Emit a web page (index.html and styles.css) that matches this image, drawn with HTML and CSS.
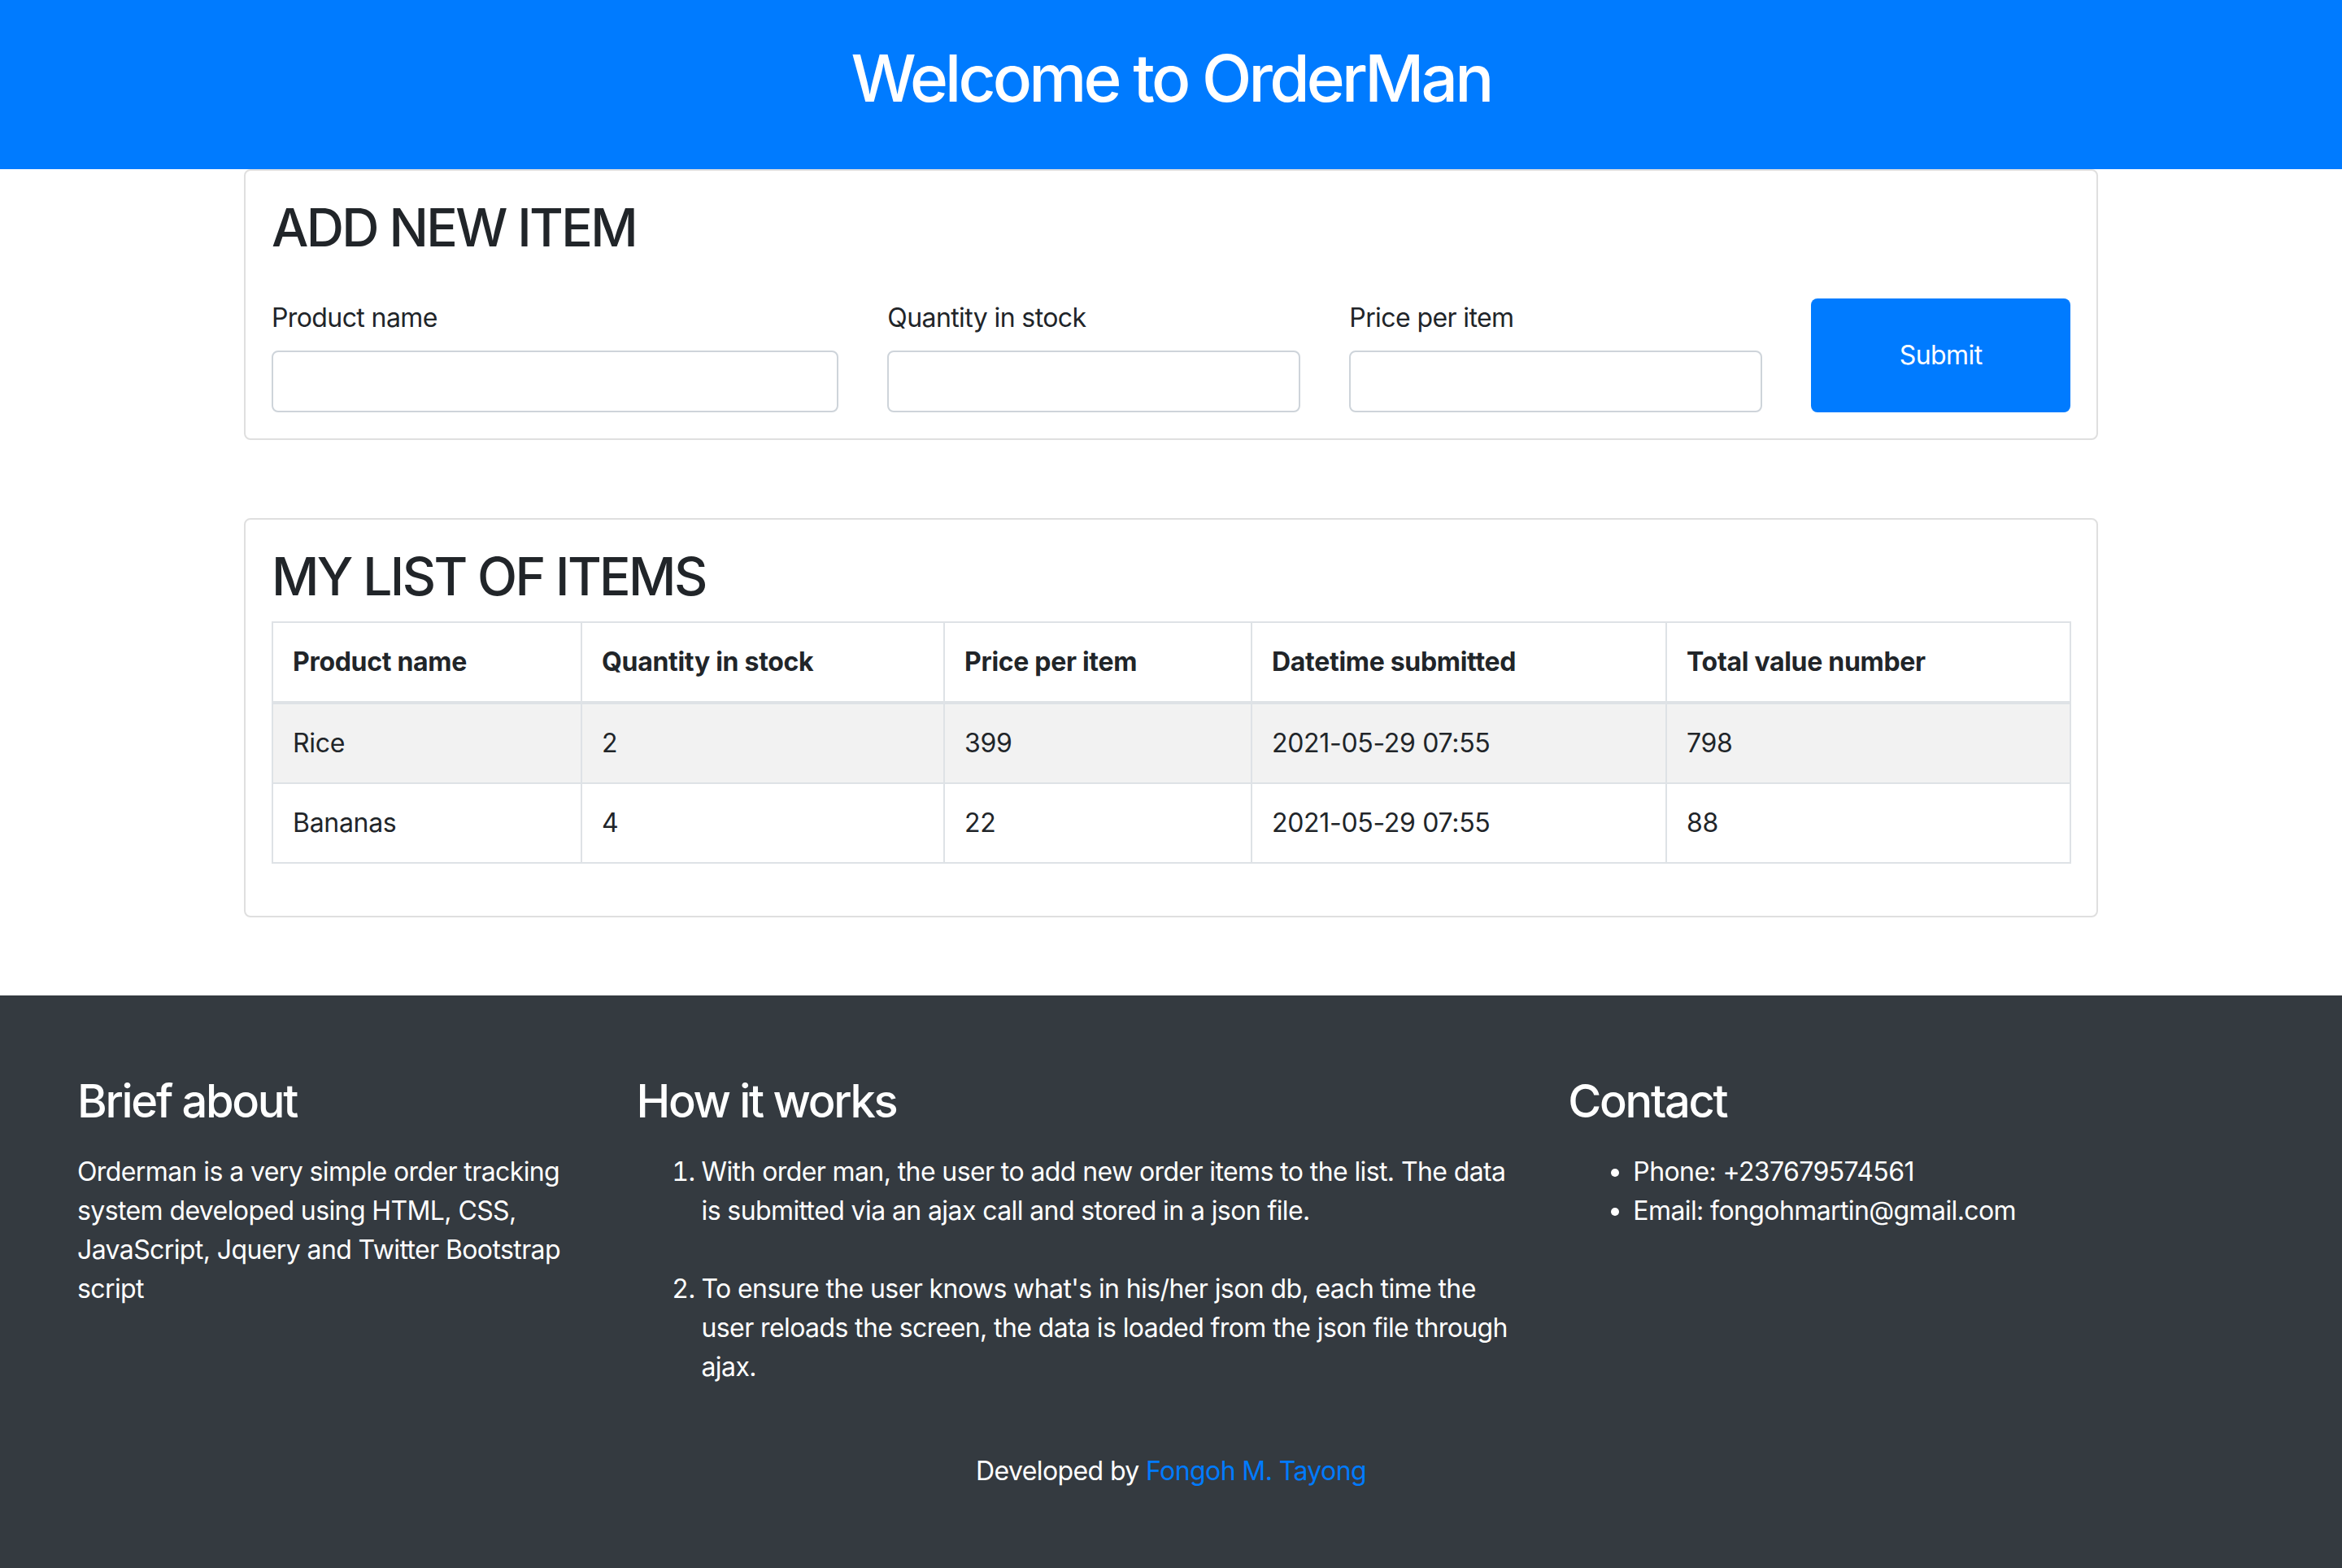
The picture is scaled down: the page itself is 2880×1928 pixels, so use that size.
FILE: index.html
```html
<!DOCTYPE html>
<html lang="en">
<head>
<meta charset="utf-8">
<title>OrderMan</title>
<link rel="stylesheet" href="styles.css">
</head>
<body>
<header class="banner">
  <h1 class="banner-title">Welcome to OrderMan</h1>
</header>

<main class="main">
  <section class="panel">
    <h2 class="panel-title panel-title-form">ADD NEW ITEM</h2>
    <form class="form-row">
      <div class="col col-4">
        <label class="field-label" for="pname">Product name</label>
        <input class="field-input" id="pname" type="text">
      </div>
      <div class="col col-3">
        <label class="field-label" for="qty">Quantity in stock</label>
        <input class="field-input" id="qty" type="text">
      </div>
      <div class="col col-3">
        <label class="field-label" for="price">Price per item</label>
        <input class="field-input" id="price" type="text">
      </div>
      <div class="col col-2 col-btn">
        <button class="btn-submit" type="button">Submit</button>
      </div>
    </form>
  </section>

  <section class="panel panel-list">
    <h2 class="panel-title">MY LIST OF ITEMS</h2>
    <table class="items">
      <thead>
        <tr>
          <th class="c1">Product name</th>
          <th class="c2">Quantity in stock</th>
          <th class="c3">Price per item</th>
          <th class="c4">Datetime submitted</th>
          <th class="c5">Total value number</th>
        </tr>
      </thead>
      <tbody>
        <tr class="striped">
          <td>Rice</td>
          <td>2</td>
          <td>399</td>
          <td>2021-05-29 07:55</td>
          <td>798</td>
        </tr>
        <tr>
          <td>Bananas</td>
          <td>4</td>
          <td>22</td>
          <td>2021-05-29 07:55</td>
          <td>88</td>
        </tr>
      </tbody>
    </table>
  </section>
</main>

<footer class="footer">
  <div class="footer-row">
    <div class="fcol fcol-3">
      <h3 class="footer-title">Brief about</h3>
      <p class="footer-text">Orderman is a very simple order tracking system developed using HTML, CSS, JavaScript, Jquery and Twitter Bootstrap script</p>
    </div>
    <div class="fcol fcol-5">
      <h3 class="footer-title">How it works</h3>
      <ol class="steps">
        <li>With order man, the user to add new order items to the list. The data is submitted via an ajax call and stored in a json file.</li>
        <li>To ensure the user knows what's in his/her json db, each time the user reloads the screen, the data is loaded from the json file through ajax.</li>
      </ol>
    </div>
    <div class="fcol fcol-4">
      <h3 class="footer-title">Contact</h3>
      <ul class="contact">
        <li>Phone: +237679574561</li>
        <li>Email: fongohmartin@gmail.com</li>
      </ul>
    </div>
  </div>
  <p class="credit">Developed by <a class="credit-link" href="#">Fongoh M. Tayong</a></p>
</footer>
</body>
</html>
```

FILE: styles.css
```css
* { box-sizing: border-box; }

html, body {
  margin: 0;
  padding: 0;
}

body {
  min-height: 100vh;
  display: flex;
  flex-direction: column;
  font-family: Inter, "Noto Sans", "Liberation Sans", sans-serif;
  font-size: 32px;
  line-height: 1.5;
  letter-spacing: -0.6px;
  color: #212529;
  background: #fff;
}

.banner {
  background: #007bff;
  padding: 48px 0;
  text-align: center;
}

.banner-title {
  margin: 0 0 16px;
  font-size: 80px;
  font-weight: 500;
  line-height: 1.2;
  color: #fff;
  letter-spacing: -3.8px;
}

.main {
  width: 2280px;
  margin: 0 auto;
}

.panel {
  border: 2px solid #dfdfdf;
  border-radius: 8px;
  padding: 32px;
  background: #fff;
}

.panel-list {
  margin-top: 96px;
}

.panel-title {
  margin: 0 0 16px;
  font-size: 64px;
  font-weight: 500;
  line-height: 1.2;
  letter-spacing: -2.6px;
}

.panel-title-form {
  margin-bottom: 48px;
}

.form-row {
  display: flex;
  margin: 0 -30px;
}

.col {
  padding: 0 30px;
  display: flex;
  flex-direction: column;
}

.col-4 { flex: 0 0 33.3333%; }
.col-3 { flex: 0 0 25%; }
.col-2 { flex: 0 0 16.6667%; }

.field-label {
  display: block;
  margin-bottom: 16px;
  line-height: 48px;
}

.field-input {
  display: block;
  width: 100%;
  height: 76px;
  border: 2px solid #ced4da;
  border-radius: 8px;
  background: #fff;
  font: inherit;
  padding: 12px 24px;
}

.col-btn {
  align-items: stretch;
}

.btn-submit {
  flex: 1;
  width: 100%;
  border: 0;
  border-radius: 8px;
  background: #007bff;
  color: #fff;
  font: inherit;
  font-size: 32px;
  line-height: 48px;
  letter-spacing: -0.6px;
  cursor: pointer;
}

.items {
  width: 100%;
  table-layout: fixed;
  border-collapse: collapse;
  margin-bottom: 32px;
}

.items th,
.items td {
  border: 2px solid #dee2e6;
  padding: 24px;
  text-align: left;
  vertical-align: top;
  line-height: 48px;
  letter-spacing: -0.3px;
}

.items th {
  font-weight: 700;
  border-bottom-width: 4px;
}

.items .c1 { width: 380px; }
.items .c2 { width: 446px; }
.items .c3 { width: 378px; }
.items .c4 { width: 510px; }
.items .c5 { width: 497px; }

.striped td {
  background: #f2f2f2;
}

.footer {
  flex: 1 0 auto;
  margin-top: 96px;
  background: #343a40;
  color: #fff;
  padding: 97px 65px 90px;
}

.footer-row {
  display: flex;
}

.fcol {
  padding: 0 30px;
}

.fcol-3 { flex: 0 0 25%; }
.fcol-5 { flex: 0 0 41.6667%; }
.fcol-4 { flex: 0 0 33.3333%; }

.footer-title {
  margin: 0 0 29px;
  font-size: 56px;
  font-weight: 500;
  line-height: 1.2;
  letter-spacing: -2.3px;
}

.footer-text {
  margin: 0 0 32px;
}

.steps {
  display: flow-root;
  margin: 0 0 32px;
  padding-left: 80px;
}

.steps li {
  margin-bottom: 48px;
}

.contact {
  margin: 0 0 32px;
  padding-left: 80px;
}

.credit {
  margin: 0;
  text-align: center;
}

.credit-link {
  color: #007bff;
  text-decoration: none;
}
```
